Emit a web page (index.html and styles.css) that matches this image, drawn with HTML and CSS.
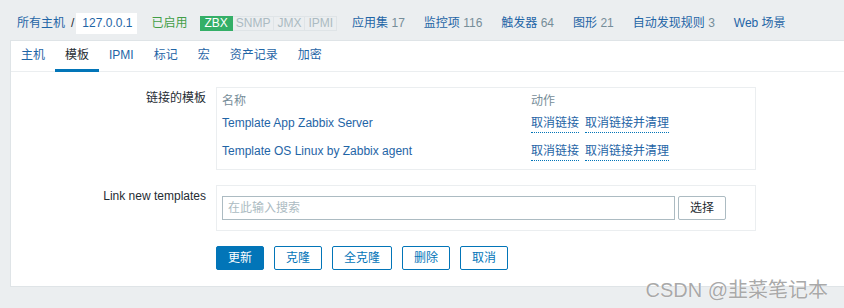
FILE: index.html
```html
<!DOCTYPE html>
<html lang="zh-CN">
<head>
    <meta charset="UTF-8">
    <title>主机 - 模板</title>
    <link rel="stylesheet" href="styles.css">
</head>
<body>

    <div class="header">
        <ul class="breadcrumbs">
            <li><a class="link">所有主机</a></li>
            <li class="sep">/</li>
            <li class="current">127.0.0.1</li>
        </ul>
        <span class="status-on">已启用</span>
        <div class="badges">
            <span class="badge badge-on">ZBX</span>
            <span class="badge">SNMP</span>
            <span class="badge">JMX</span>
            <span class="badge">IPMI</span>
        </div>
        <ul class="host-nav">
            <li><a class="link">应用集</a> <span class="count">17</span></li>
            <li><a class="link">监控项</a> <span class="count">116</span></li>
            <li><a class="link">触发器</a> <span class="count">64</span></li>
            <li><a class="link">图形</a> <span class="count">21</span></li>
            <li><a class="link">自动发现规则</a> <span class="count">3</span></li>
            <li><a class="link">Web 场景</a></li>
        </ul>
    </div>

    <div class="panel">
        <ul class="tabs">
            <li class="tab">主机</li>
            <li class="tab tab-active">模板</li>
            <li class="tab">IPMI</li>
            <li class="tab">标记</li>
            <li class="tab">宏</li>
            <li class="tab">资产记录</li>
            <li class="tab">加密</li>
        </ul>

        <div class="form">
            <div class="form-label">链接的模板</div>
            <div class="form-box">
                <table class="list">
                    <tr>
                        <th class="col-name">名称</th>
                        <th>动作</th>
                    </tr>
                    <tr>
                        <td><a class="link">Template App Zabbix Server</a></td>
                        <td class="actions"><span class="action">取消链接</span><span class="action">取消链接并清理</span></td>
                    </tr>
                    <tr>
                        <td><a class="link">Template OS Linux by Zabbix agent</a></td>
                        <td class="actions"><span class="action">取消链接</span><span class="action">取消链接并清理</span></td>
                    </tr>
                </table>
            </div>

            <div class="form-label">Link new templates</div>
            <div class="form-box form-box-search">
                <input class="search-input" type="text" placeholder="在此输入搜索">
                <button class="btn-grey">选择</button>
            </div>

            <div class="form-buttons">
                <button class="btn btn-main">更新</button>
                <button class="btn">克隆</button>
                <button class="btn">全克隆</button>
                <button class="btn">删除</button>
                <button class="btn">取消</button>
            </div>
        </div>
    </div>

    <div class="watermark">CSDN @韭菜笔记本</div>

</body>
</html>
```

FILE: styles.css
```css
body {
    margin: 0;
    background-color: #ebeef0;
    color: #1f2c33;
    font-family: "Liberation Sans", Arial, "Noto Sans CJK SC", sans-serif;
    font-size: 12px;
    line-height: 14px;
    height: 308px;
    overflow: hidden;
    position: relative;
}
ul {
    list-style: none;
    margin: 0;
    padding: 0;
}
.link {
    color: #1f65a6;
    text-decoration: none;
}

/* 顶部主机导航 */
.header {
    height: 40px;
    box-sizing: border-box;
    padding: 6px 0 0 17px;
    display: flex;
    align-items: center;
}
.breadcrumbs {
    display: flex;
    align-items: center;
}
.breadcrumbs .sep {
    margin: 0 2px 0 6px;
    color: #1f2c33;
}
.breadcrumbs .current {
    background-color: #ffffff;
    padding: 3px 5px 4px 6px;
    color: #1f65a6;
}
.status-on {
    color: #429e47;
    margin-left: 14px;
}
.badges {
    display: flex;
    margin-left: 13px;
}
.badge {
    display: block;
    height: 13px;
    line-height: 13px;
    padding: 0 3px;
    border: 1px solid #dfe4e7;
    border-left: none;
    color: #acbbc2;
    background-color: #ebeef0;
}
.badge-on {
    background-color: #34af67;
    border-color: #34af67;
    color: #ffffff;
    padding: 0 4px;
}
.host-nav {
    display: flex;
    gap: 19px;
    margin-left: 15px;
}
.count {
    color: #768d99;
}

/* 主面板 */
.panel {
    margin-left: 10px;
    background-color: #ffffff;
    border: 1px solid #dfe4e7;
    border-right: none;
}
.tabs {
    display: flex;
    height: 30px;
    border-bottom: 1px solid #ebeef0;
}
.tab {
    height: 28px;
    line-height: 28px;
    padding: 0 10px;
    border-bottom: 3px solid transparent;
    margin-bottom: -1px;
    color: #1f65a6;
}
.tab-active {
    color: #1f2c33;
    border-bottom-color: #0275b8;
}

.form {
    display: grid;
    grid-template-columns: 195px 540px;
    column-gap: 10px;
    row-gap: 15px;
    padding: 15px 0 16px;
}
.form-label {
    text-align: right;
    padding-top: 4px;
}
.form-box {
    border: 1px solid #ebeef0;
    padding-bottom: 2px;
}
.list {
    width: 100%;
    border-collapse: collapse;
    table-layout: fixed;
}
.list th {
    text-align: left;
    font-weight: normal;
    color: #768d99;
    padding: 6px 5px 3px;
}
.list .col-name {
    width: 299px;
}
.list td {
    height: 23px;
    padding: 5px 5px 0;
    vertical-align: top;
}
.actions {
    white-space: nowrap;
}
.action {
    color: #1f65a6;
    border-bottom: 1px dotted #0275b8;
    padding-bottom: 2px;
    margin-right: 6px;
}

.form-box-search {
    display: flex;
    padding: 10px 5px;
}
.search-input {
    width: 453px;
    height: 24px;
    box-sizing: border-box;
    margin: 0;
    padding: 0 5px;
    border: 1px solid #acbbc2;
    font: inherit;
    color: #1f2c33;
    outline: none;
}
.search-input::placeholder {
    color: #acbbc2;
}
.btn-grey {
    margin-left: 3px;
    width: 48px;
    height: 24px;
    border: 1px solid #acbbc2;
    border-radius: 2px;
    background-color: #ffffff;
    color: #1f2c33;
    font: inherit;
    padding: 0;
}

.form-buttons {
    grid-column: 2;
    display: flex;
    gap: 10px;
}
.btn {
    height: 24px;
    padding: 0 11px;
    border: 1px solid #0275b8;
    border-radius: 2px;
    background-color: #ffffff;
    color: #0275b8;
    font: inherit;
}
.btn-main {
    background-color: #0275b8;
    color: #ffffff;
}

.watermark {
    position: absolute;
    right: 16px;
    top: 278px;
    font-size: 20px;
    line-height: 24px;
    color: #a9a9a9;
    text-shadow: 0 0 1px #ffffff, 0 0 1px #ffffff;
}
```
